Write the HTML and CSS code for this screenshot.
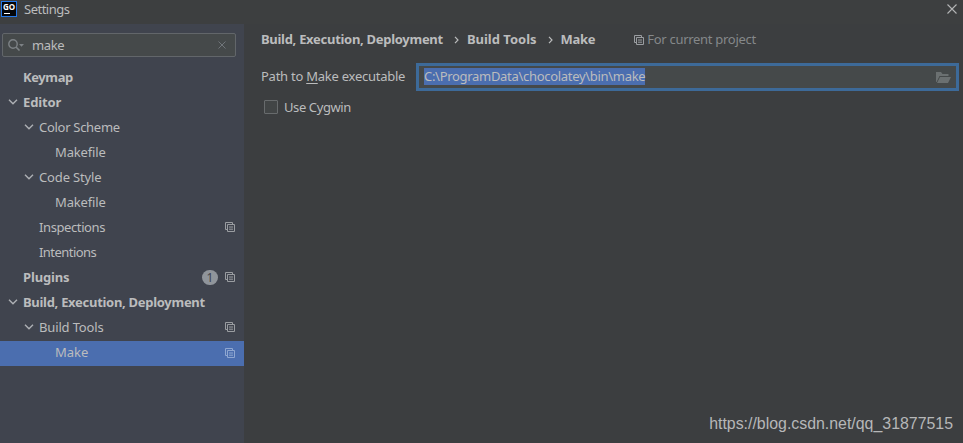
FILE: index.html
```
<!DOCTYPE html>
<html lang="en">
<head>
<meta charset="utf-8">
<title>Settings</title>
<link rel="stylesheet" href="styles.css">
</head>
<body>
<svg class="defs" width="0" height="0" aria-hidden="true">
  <symbol id="copy" viewBox="0 0 10 10"><path d="M2.5 7.5H.5V.5H7.5V2.5M2.5 2.5H9.5V9.5H2.5ZM4 5H8M4 7.2H8" fill="none" stroke="currentColor"/></symbol>
  <symbol id="chev" viewBox="0 0 10 6"><path d="M1 .8L5 4.8L9 .8" fill="none" stroke="currentColor" stroke-width="1.4"/></symbol>
  <symbol id="crumb" viewBox="0 0 5 8"><path d="M1 .8L4 4L1 7.2" fill="none" stroke="currentColor" stroke-width="1.2"/></symbol>
</svg>
<div class="window">
  <header class="titlebar">
    <span class="logo">GO</span>
    <span class="title">Settings</span>
    <svg class="close" viewBox="0 0 10 10"><path d="M.5 .5L9.5 9.5M9.5 .5L.5 9.5" fill="none" stroke="currentColor" stroke-width="1.1"/></svg>
  </header>
  <div class="body">
    <aside class="sidebar">
      <div class="search">
        <svg class="mag" viewBox="0 0 17 12"><circle cx="5" cy="5" r="4.2" fill="none" stroke="currentColor" stroke-width="1.4"/><path d="M8 8L11.5 11.5" stroke="currentColor" stroke-width="1.6"/><path d="M11 5H16L13.5 7.7Z" fill="currentColor"/></svg>
        <span class="query">make</span>
        <svg class="clear" viewBox="0 0 8 8"><path d="M.5 .5L7.5 7.5M7.5 .5L.5 7.5" stroke="currentColor"/></svg>
      </div>
      <nav class="tree">
        <div class="row l1 bold"><span class="label tight">Keymap</span></div>
        <div class="row l1 bold"><svg class="chev"><use href="#chev"/></svg><span class="label slight">Editor</span></div>
        <div class="row l2"><svg class="chev"><use href="#chev"/></svg><span class="label snug">Color Scheme</span></div>
        <div class="row l3"><span class="label slight">Makefile</span></div>
        <div class="row l2"><svg class="chev"><use href="#chev"/></svg><span class="label slight">Code Style</span></div>
        <div class="row l3"><span class="label slight">Makefile</span></div>
        <div class="row l2"><span class="label tight">Inspections</span><svg class="copy"><use href="#copy"/></svg></div>
        <div class="row l2"><span class="label tighter">Intentions</span></div>
        <div class="row l1 bold"><span class="label slight">Plugins</span><span class="badge">1</span><svg class="copy"><use href="#copy"/></svg></div>
        <div class="row l1 bold"><svg class="chev"><use href="#chev"/></svg><span class="label snug">Build, Execution, Deployment</span></div>
        <div class="row l2"><svg class="chev"><use href="#chev"/></svg><span class="label slight">Build Tools</span><svg class="copy"><use href="#copy"/></svg></div>
        <div class="row l3 selected"><span class="label">Make</span><svg class="copy"><use href="#copy"/></svg></div>
      </nav>
    </aside>
    <main class="content">
      <div class="crumbs">
        <span class="snug">Build, Execution, Deployment</span><svg class="sep"><use href="#crumb"/></svg><span>Build Tools</span><svg class="sep"><use href="#crumb"/></svg><span class="last">Make</span>
        <svg class="copy"><use href="#copy"/></svg><span class="scope snug">For current project</span>
      </div>
      <div class="field">
        <span class="path-label">Path to <u>M</u>ake executable</span>
        <div class="input"><span class="sel">C:\ProgramData\chocolatey\bin\make</span>
          <svg class="folder" viewBox="0 0 15 11"><path d="M0 10V0H5L6.5 2H12.5V4H3.5L.6 10Z M4 5H15L12 11H1Z" fill="currentColor"/></svg>
        </div>
      </div>
      <div class="check"><span class="box"></span><span class="tight">Use Cygwin</span></div>
      <div class="watermark">https://blog.csdn.net/qq_31877515</div>
    </main>
  </div>
</div>
</body>
</html>
```
FILE: styles.css
```
* { box-sizing: border-box; }
body { margin: 0; background: #3c3e40; color: #bbbcbd; font: 13px/20px "Noto Sans", sans-serif; overflow: hidden; }
svg { display: block; flex: none; }
.defs { position: absolute; }
.slight { letter-spacing: -0.15px; }
.snug { letter-spacing: -0.29px; }
.tight { letter-spacing: -0.4px; }
.tighter { letter-spacing: -0.55px; }
.window { width: 963px; height: 443px; display: flex; flex-direction: column; }
.titlebar { height: 24px; display: flex; align-items: flex-start; padding: 1px 6px 0 1px; background: #3d3f40; }
.logo { width: 16px; height: 16px; background: #050608; border: 1px solid #2479e8; color: #fff; font: bold 8px/10px "Open Sans", sans-serif; padding-left: 1px; position: relative; }
.logo::after { content: ""; position: absolute; left: 2px; bottom: 2px; width: 6px; height: 1px; background: #fff; }
.title { margin-left: 7px; line-height: 17px; flex: 1; letter-spacing: -0.5px; }
.close { width: 10px; height: 10px; margin-top: 3px; color: #b4b5b6; }
.body { flex: 1; display: flex; }
.sidebar { width: 244px; background: #40444e; padding-top: 9px; }
.search { width: 234px; height: 24px; margin: 0 0 8px 2px; border: 1px solid #62666a; border-radius: 2px; background: #45494a; display: flex; align-items: center; padding: 0 9px 0 5px; }
.mag { width: 17px; height: 12px; color: #7d8286; }
.query { flex: 1; margin: 0 0 1px 7px; letter-spacing: -0.4px; }
.clear { width: 8px; height: 8px; color: #70757a; }
.row { height: 25px; display: flex; align-items: center; padding-right: 9px; }
.l1 { padding-left: 23px; }
.l2 { padding-left: 39px; }
.l3 { padding-left: 55px; }
.label { flex: 1; white-space: nowrap; padding-bottom: 1px; }
.bold { font-weight: bold; }
.chev { width: 10px; height: 6px; margin: 0 5px 1px -15px; color: #adb0b4; }
.copy { width: 10px; height: 10px; color: #9a9da1; }
.row .copy { margin-bottom: 1px; }
.badge { width: 16px; height: 15px; border-radius: 8px; background: #90959b; color: #40444e; font: 12px/15px "Noto Sans", sans-serif; text-align: center; margin: 0 7px 1px 0; }
.selected { background: #4b6eaf; margin-top: 1px; }
.selected .label { padding-bottom: 3px; }
.selected .copy { color: #8fa7d1; margin-bottom: 2px; }
.content { flex: 1; display: flex; flex-direction: column; padding: 5px 4px 0 17px; }
.crumbs { height: 20px; display: flex; align-items: center; font-weight: bold; white-space: nowrap; }
.sep { width: 5px; height: 8px; margin: 1px 8px 0 11px; }
.last { letter-spacing: -0.3px; }
.crumbs .copy { margin-left: 39px; margin-top: 1px; }
.scope { margin-left: 3px; font-weight: normal; color: #85888a; }
.field { display: flex; align-items: center; margin-top: 14px; }
.path-label { width: 155px; white-space: nowrap; letter-spacing: -0.25px; margin-bottom: 2px; }
.path-label u { text-underline-offset: 2px; }
.input { flex: 1; height: 28px; border: 3px solid #3d6a99; background: #45494a; display: flex; align-items: center; justify-content: space-between; padding: 0 5px; }
.sel { background: #4b6eaf; line-height: 17px; height: 17px; white-space: nowrap; letter-spacing: -0.3px; margin-bottom: 1px; }
.folder { width: 15px; height: 11px; color: #6b7071; }
.check { display: flex; align-items: center; margin-top: 6px; padding-left: 3px; gap: 6px; }
.box { width: 14px; height: 14px; border: 1px solid #686b6d; border-radius: 1px; background: #424546; }
.watermark { margin: auto 6px 8px auto; font: 15.9px/22px "Liberation Sans", sans-serif; color: #b6b7b8; }
```
